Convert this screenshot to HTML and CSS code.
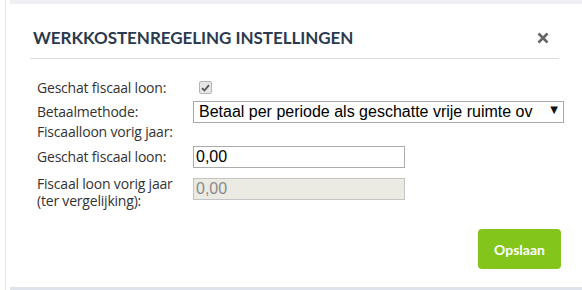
FILE: index.html
```html
<!DOCTYPE html>
<html lang="nl">
<head>
<meta charset="utf-8">
<title>Werkkostenregeling instellingen</title>
<link rel="stylesheet" href="styles.css">
</head>
<body>
<div class="frame">
  <div class="topband"></div>
  <div class="dialog">
    <div class="header">
      <h1 class="title">WERKKOSTENREGELING INSTELLINGEN</h1>
      <button class="close" aria-label="Sluiten">
        <svg width="12" height="12" viewBox="0 0 12 12"><path d="M1.5 1.5 L10.5 10.5 M10.5 1.5 L1.5 10.5" stroke="#666" stroke-width="2.6" stroke-linecap="butt"/></svg>
      </button>
    </div>
    <div class="form">
      <div class="row r1">
        <label class="lbl">Geschat fiscaal loon:</label>
        <div class="ctl"><span class="check"><svg width="9" height="8" viewBox="0 0 9 8"><path d="M1 4.2 L3.4 6.5 L8 1.2" fill="none" stroke="#555" stroke-width="1.8"/></svg></span></div>
      </div>
      <div class="row r2">
        <label class="lbl">Betaalmethode:</label>
        <div class="ctl">
          <div class="selectwrap">
            <select class="select">
              <option>Betaal per periode als geschatte vrije ruimte overschreden</option>
            </select>
            <span class="arrow">&#9660;</span>
          </div>
        </div>
      </div>
      <div class="row r3">
        <label class="lbl">Fiscaalloon vorig jaar:</label>
      </div>
      <div class="row r4">
        <label class="lbl">Geschat fiscaal loon:</label>
        <div class="ctl"><input class="input" type="text" value="0,00"></div>
      </div>
      <div class="row r5">
        <label class="lbl two">Fiscaal loon vorig jaar<br>(ter vergelijking):</label>
        <div class="ctl"><input class="input disabled" type="text" value="0,00" disabled></div>
      </div>
    </div>
    <div class="footer">
      <button class="save">Opslaan</button>
    </div>
  </div>
  <div class="bottomband"></div>
</div>
</body>
</html>
```

FILE: styles.css
```css
* { box-sizing: border-box; }
html, body { margin: 0; padding: 0; background: #fff; }
body { width: 582px; height: 290px; overflow: hidden; font-family: "Open Sans", Lato, sans-serif; }

.frame {
  margin-left: 5px;
  border-left: 1px solid #e4e4e4;
  height: 290px;
  display: flex;
  flex-direction: column;
}
.topband { margin-left: 4px; height: 4px; background: #eeeff2; flex: none; }
.bottomband { margin-left: 4px; height: 3px; background: #dfe3ea; flex: none; }

.dialog { flex: 1; padding: 0 23px 0 24px; display: flex; flex-direction: column; }

.header {
  display: flex;
  align-items: center;
  justify-content: space-between;
  padding: 24px 10px 10px 3px;
  border-bottom: 1px solid #dcdcdc;
}
.title {
  margin: 0;
  font-family: Lato, sans-serif;
  font-weight: 700;
  font-size: 17px;
  line-height: 20px;
  color: #2b3a4e;
  letter-spacing: -0.05px;
}
.close {
  border: 0;
  background: none;
  padding: 0;
  width: 12px;
  height: 12px;
  display: flex;
}

.form { padding-left: 7px; margin-top: 20px; }
.row { display: grid; grid-template-columns: 156px 1fr; align-items: center; }
.lbl { font-family: "Open Sans", sans-serif; font-size: 14px; line-height: 17px; color: #333; letter-spacing: -0.2px; }
.r1 { height: 17px; }
.r2 { margin-top: 4px; }
.r3 { margin-top: 1px; }
.r4 { margin-top: 5px; }
.r5 { margin-top: 7px; align-items: start; }
.r5 .ctl { padding-top: 2px; }
.lbl.two { line-height: 17px; }

.check {
  margin-left: 6px;
  width: 13px;
  height: 13px;
  border: 1px solid #b5b5b5;
  border-radius: 2px;
  background: #e6e6e6;
  display: flex;
  align-items: center;
  justify-content: center;
}

.selectwrap { position: relative; width: 371px; height: 22px; }
.select {
  -webkit-appearance: none;
  appearance: none;
  width: 100%;
  height: 22px;
  border: 1px solid #a9a9a9;
  background: #fff;
  font-family: "Liberation Sans", Arial, sans-serif;
  font-size: 16px;
  color: #000;
  padding: 0 30px 0 5px;
  border-radius: 0;
}
.arrow {
  position: absolute;
  right: 6px;
  top: 4px;
  font-size: 10px;
  line-height: 12px;
  color: #111;
  font-family: "DejaVu Sans", sans-serif;
  pointer-events: none;
}

.input {
  width: 212px;
  height: 22px;
  border: 1px solid #ababab;
  padding: 1px 2px;
  font-family: "Liberation Sans", Arial, sans-serif;
  font-size: 16px;
  color: #000;
  background: #fff;
  border-radius: 0;
}
.input.disabled { background: #ebebe4; color: #8a8a8a; border-color: #c4c4c4; }

.footer { display: flex; justify-content: flex-end; margin-top: 20px; margin-right: -2px; }
.save {
  width: 83px;
  height: 40px;
  border: 0;
  border-radius: 4px;
  background: #84c51b;
  color: #fff;
  font-family: Lato, sans-serif;
  font-weight: 700;
  font-size: 14px;
}
```
